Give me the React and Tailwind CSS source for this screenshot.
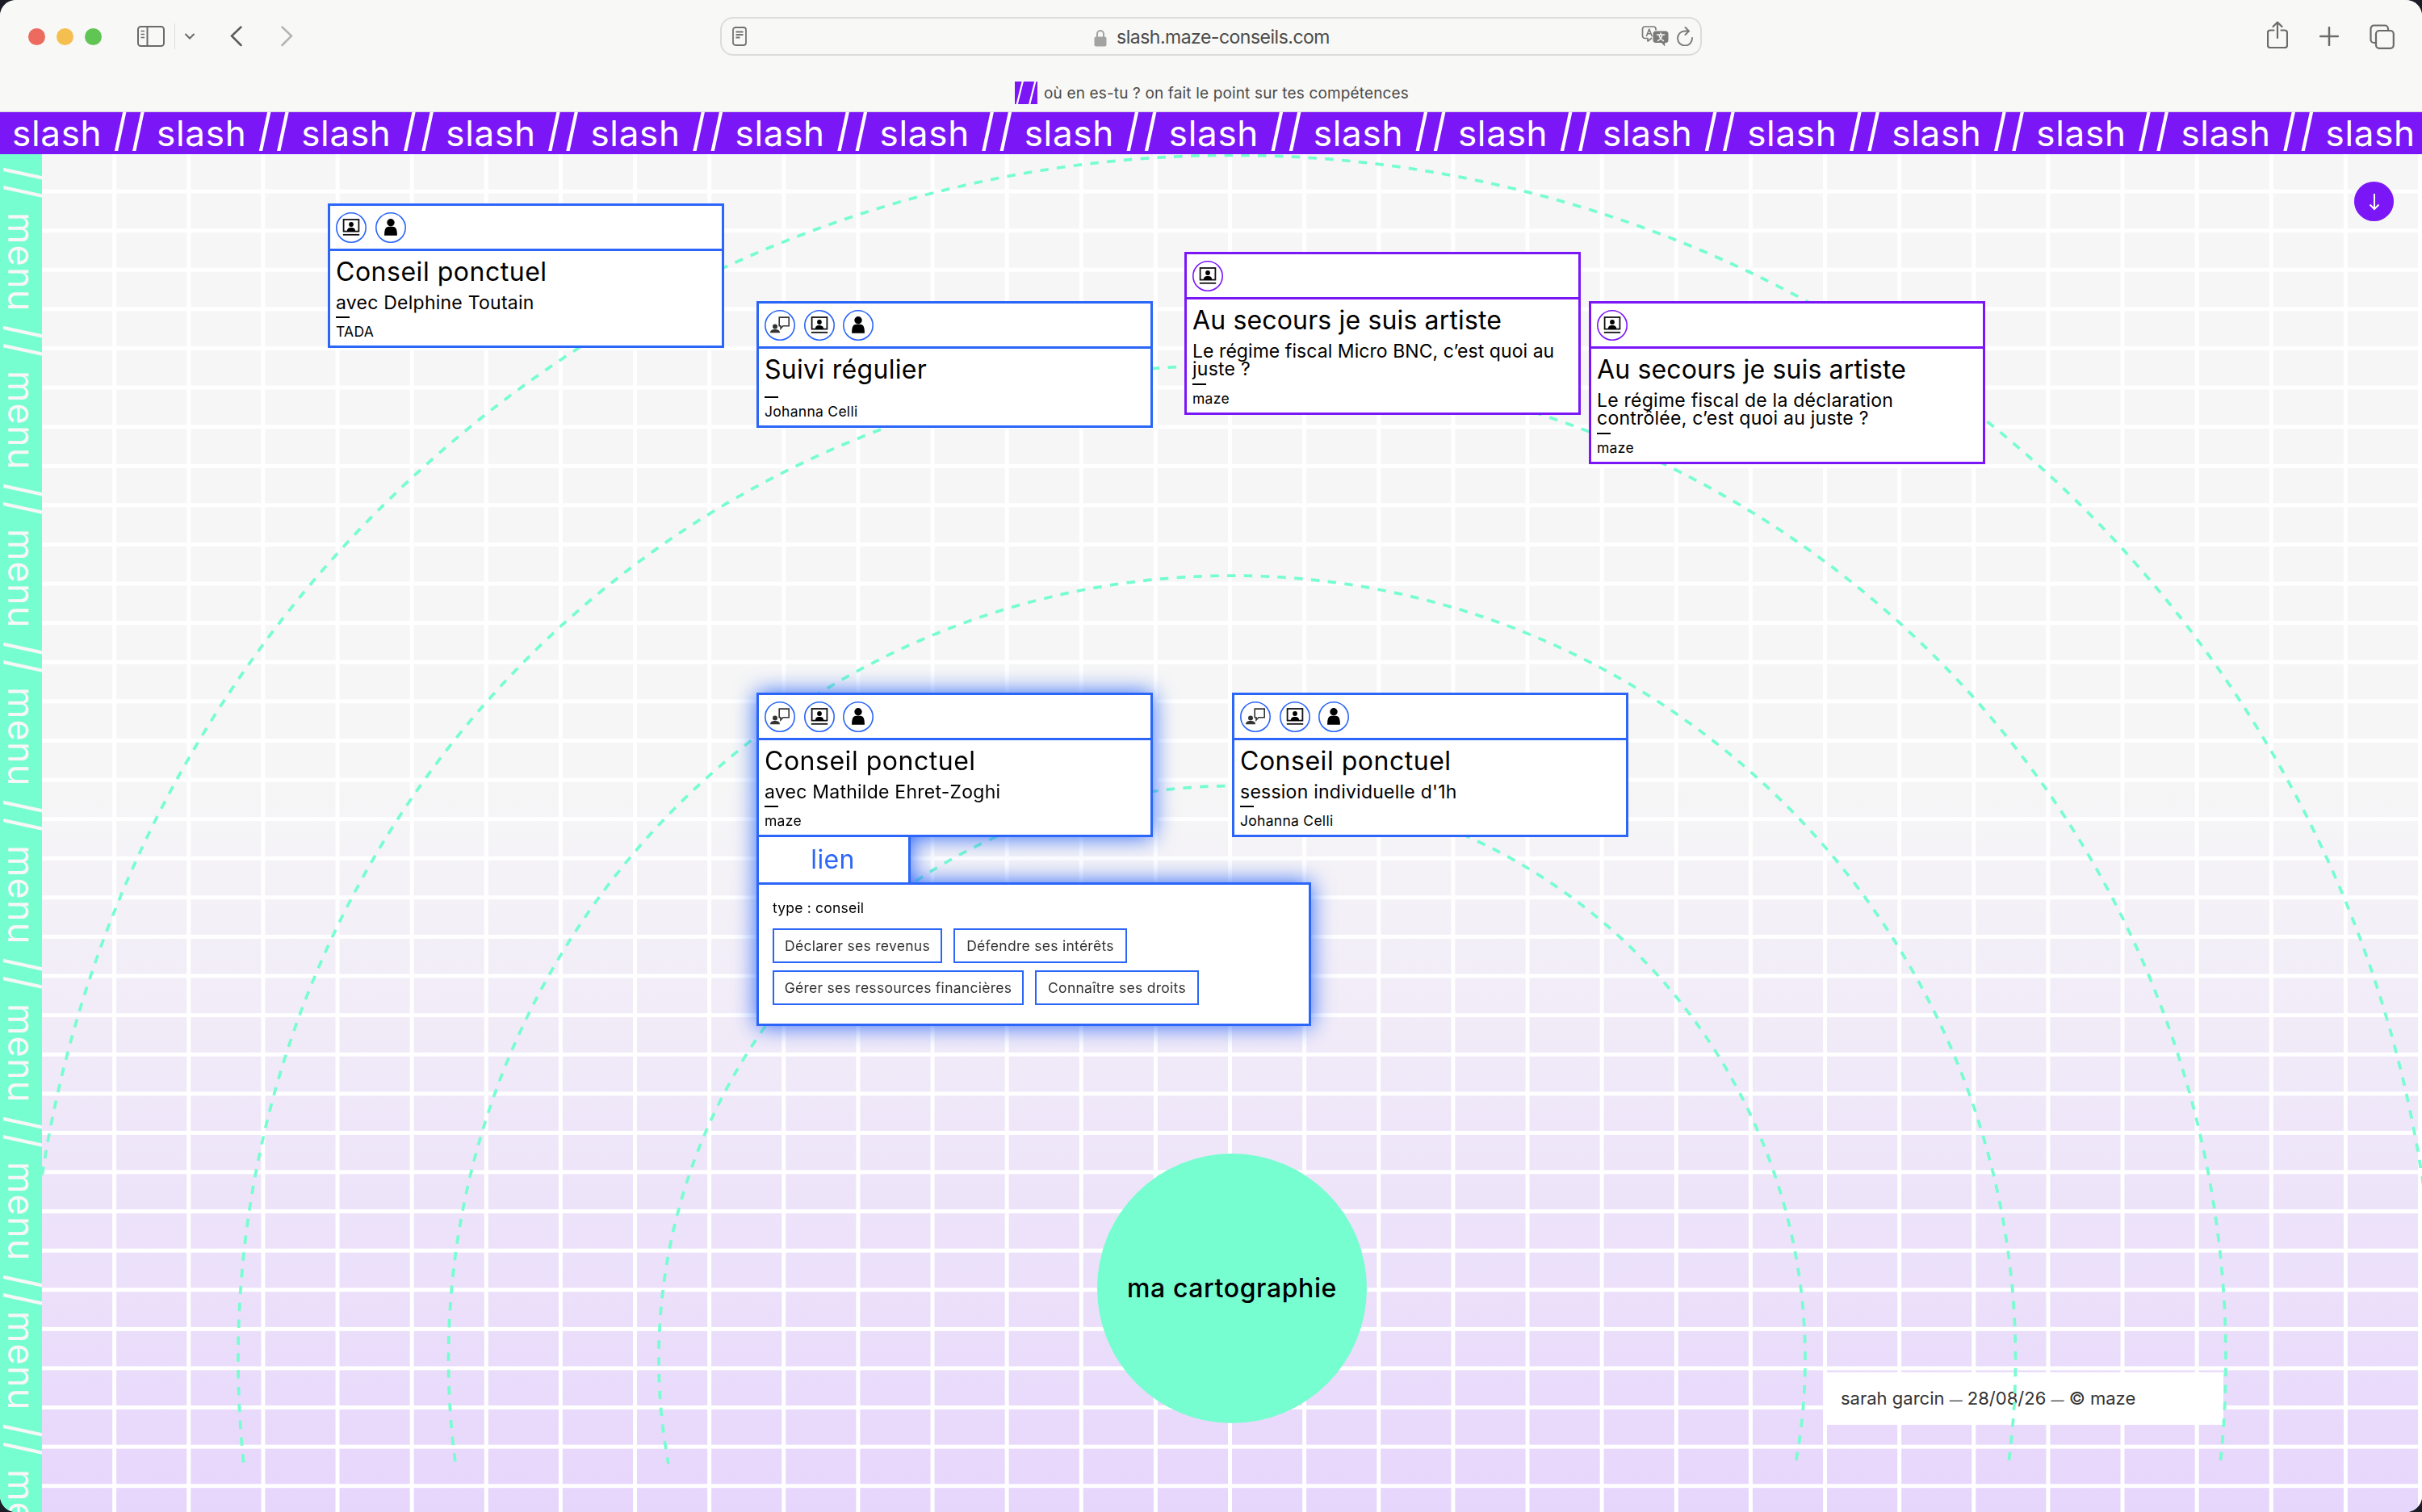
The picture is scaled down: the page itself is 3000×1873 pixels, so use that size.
import React from "react";

const BANNER_ITEMS = Array.from({ length: 17 });
const MENU_ITEMS = Array.from({ length: 9 });

// dashed rings around the centre of the map
const RINGS = [
  { r: 710, dash: 10.415, offset: 0 },
  { r: 970.5, dash: 10.415, offset: 0 },
  { r: 1231, dash: 10.432, offset: 0 },
  { r: 1491.3, dash: 10.415, offset: -9 },
];
const CENTER_X = 1474;
const CENTER_Y = 1492.6;

function ringPath(r) {
  const right = Math.sqrt(r * r - 125.4 * 125.4);
  const left = Math.sqrt(r * r - 130 * 130);
  return `M ${CENTER_X + right} ${CENTER_Y + 125.4} A ${r} ${r} 0 1 0 ${CENTER_X - left} ${CENTER_Y + 130}`;
}

function ChatIcon() {
  return (
    <>
      <circle cx="13" cy="20.6" r="3" fill="#333" />
      <path d="M7 28.2c0-2.800 2.200-4.200 6-4.200s6 1.400 6 4.200z" fill="#333" />
      <path d="M18.200 9.100h12v10.700h-7.200l-3 3.200v-3.200h-1.800z" fill="none" stroke="#333" strokeWidth="1.600" />
    </>
  );
}

function ScreenIcon() {
  return (
    <>
      <rect x="9.600" y="9" width="18.800" height="14.600" fill="none" stroke="#111" strokeWidth="1.800" />
      <circle cx="19" cy="15" r="2.900" />
      <path d="M13.800 24c0-3.600 1.800-4.900 5.200-4.900s5.200 1.300 5.200 4.900z" />
      <path d="M8.800 27.800h20.400" stroke="#111" strokeWidth="1.800" />
    </>
  );
}

function PersonIcon() {
  return (
    <>
      <circle cx="19" cy="12.700" r="4.700" />
      <path d="M11.100 28.700c0-7.500 1.300-11 5.400-11h5c4.100 0 5.400 3.500 5.400 11z" />
    </>
  );
}

const ICONS = { chat: ChatIcon, screen: ScreenIcon, person: PersonIcon };

function Card({ icons, title, titleClass = "tracking-[0.520px]", lines = [], author, purple }) {
  const border = purple ? "border-[#7b16f7]" : "border-[#2b66f8]";
  return (
    <div className={`w-[491px] border-[3px] bg-white text-black ${border}`}>
      <div className={`flex h-14 items-center gap-[10.500px] border-b-[3px] pl-[7px] ${border}`}>
        {icons.map((name) => {
          const Icon = ICONS[name];
          return (
            <svg key={name} viewBox="0 0 38 38" className="h-[38px] w-[38px]">
              <circle cx="19" cy="19" r="18.200" fill="none" stroke={purple ? "#7b16f7" : "#2b66f8"} strokeWidth="1.600" />
              <Icon />
            </svg>
          );
        })}
      </div>
      <div className="pt-[6px] pb-[7px] pl-[7px]">
        <h2 className={`pb-[7px] text-[32px] leading-10 whitespace-nowrap ${titleClass}`}>{title}</h2>
        {lines.map((line) => (
          <p
            key={line}
            className={`text-[23px] leading-[22.300px] whitespace-nowrap ${line.length > 40 ? "tracking-[0.060px]" : "tracking-[0.240px]"}`}
          >
            {line}
          </p>
        ))}
        <div className="mt-[6px] mb-[7px] h-0.5 w-[17px] bg-black" />
        <p className="text-[17.500px] leading-5 tracking-[0.280px]">{author}</p>
      </div>
    </div>
  );
}

function Tag({ className, children }) {
  return (
    <span className={`flex h-[43px] items-center justify-center border-2 border-[#2b66f8] text-[17.500px] tracking-[0.280px] whitespace-nowrap text-[#333] ${className}`}>
      {children}
    </span>
  );
}

function Toolbar() {
  return (
    <header className="h-[139px] border-b border-[#d6d3da] bg-[#f8f8f6]">
      <div className="flex h-[90px] items-center">
        <div className="flex w-[892px] items-center pl-[35px]">
          <div className="flex gap-3.5">
            <div className="h-[21px] w-[21px] rounded-full bg-[#ed6a5e]" />
            <div className="h-[21px] w-[21px] rounded-full bg-[#f5bf4f]" />
            <div className="h-[21px] w-[21px] rounded-full bg-[#61c554]" />
          </div>
          <svg viewBox="0 0 34 26" className="ml-11 h-[26px] w-[34px]" fill="none" stroke="#6b6b69" strokeWidth="2">
            <rect x="1" y="1" width="32" height="24" rx="3.500" />
            <path d="M12.500 1v24" />
            <path d="M4.500 6.500h4.500M4.500 10.500h4.500M4.500 14.500h4.500" strokeWidth="1.500" />
          </svg>
          <div className="ml-3 h-8 w-px bg-[#dededc]" />
          <svg viewBox="0 0 12 8" className="ml-3 h-2 w-3" fill="none" stroke="#6b6b69" strokeWidth="2" strokeLinecap="round">
            <path d="M1 1.500l5 5 5-5" />
          </svg>
          <svg viewBox="0 0 15 26" className="ml-[44px] h-[26px] w-[15px]" fill="none" stroke="#5c5c5a" strokeWidth="2.500" strokeLinecap="round">
            <path d="M13.500 1.500L2 12.500l11.500 11.500" />
          </svg>
          <svg viewBox="0 0 15 26" className="ml-[48px] h-[26px] w-[15px]" fill="none" stroke="#b4b4b2" strokeWidth="2.500" strokeLinecap="round">
            <path d="M1.500 1.500L13 12.500 1.500 24" />
          </svg>
        </div>
        <div className="flex h-12 w-[1216px] items-center rounded-[16px] border-2 border-[#dcdcda] px-[13px]">
          <svg viewBox="0 0 18 24" className="h-6 w-[18px]" fill="none" stroke="#737371" strokeWidth="1.800">
            <rect x="1" y="1" width="16" height="22" rx="3" />
            <path d="M4.500 6.500h9M4.500 10h9M4.500 13.500h5" />
          </svg>
          <div className="flex flex-1 items-center justify-center gap-3 pt-[3px] pl-[44px] text-[23px] text-[#4b4b4a]">
            <svg viewBox="0 0 16 22" className="h-[22px] w-4">
              <path d="M4 10V6a4 4 0 0 1 8 0v4" fill="none" stroke="#a3a3a1" strokeWidth="2" />
              <rect x="0.500" y="9.500" width="15" height="12" rx="2" fill="#a3a3a1" />
            </svg>
            <span className="tracking-[-0.500px]">slash.maze-conseils.com</span>
          </div>
          <svg viewBox="0 0 34 26" className="h-[26px] w-[34px]" fill="none" strokeLinejoin="round" strokeLinecap="round">
            <path d="M12.500 15.500L8 19v-3.500H4.500A3 3 0 0 1 1.500 12.500v-8.500a3 3 0 0 1 3-3h10.500a3 3 0 0 1 3 3v.800" stroke="#7a7a78" strokeWidth="1.700" />
            <path d="M6.500 12.500L9.800 4l3.300 8.500M7.800 9.800h4" stroke="#7a7a78" strokeWidth="1.600" />
            <path d="M18 6.500h12a3.500 3.500 0 0 1 3.500 3.500v7.500A3.500 3.500 0 0 1 30 21h-.800v4.500L25 21h-7a3.500 3.500 0 0 1-3.500-3.500V10A3.500 3.500 0 0 1 18 6.500z" fill="#7a7a78" />
            <path d="M19.500 11h9M24 9v2M20.500 18.500c3-1.500 5-4 5.500-7.500M27.500 18.500c-3-1.500-5-4-5.500-7.500" stroke="#f8f8f6" strokeWidth="1.500" />
          </svg>
          <svg viewBox="0 0 20 24" className="mr-[-4px] ml-2.5 h-6 w-5" fill="none" stroke="#7a7a78" strokeWidth="1.900" strokeLinecap="round">
            <path d="M13.500 5.500H10A9 9 0 1 0 19 14M10.500 1l4.500 4.500-4.500 4.500" />
          </svg>
        </div>
        <div className="flex flex-1 items-center justify-end pr-[34px] text-[#6b6b69]">
          <svg viewBox="0 0 26 34" className="mb-1 h-[34px] w-[26px]" fill="none" stroke="currentColor" strokeWidth="2.200" strokeLinecap="round" strokeLinejoin="round">
            <path d="M8.500 11.500H4a3 3 0 0 0-3 3V30a3 3 0 0 0 3 3h18a3 3 0 0 0 3-3V14.500a3 3 0 0 0-3-3h-4.500M13 21V1.500M7.500 7L13 1.500 18.500 7" />
          </svg>
          <svg viewBox="0 0 24 24" className="ml-[39px] h-6 w-6" fill="none" stroke="currentColor" strokeWidth="2.500" strokeLinecap="round">
            <path d="M12 1v22M1 12h22" />
          </svg>
          <svg viewBox="0 0 31 31" className="ml-[38px] h-[31px] w-[31px]" fill="none" stroke="currentColor" strokeWidth="2.200">
            <path d="M8 23H5.500a4 4 0 0 1-4-4V5.500a4 4 0 0 1 4-4H19a4 4 0 0 1 4 4V8" />
            <rect x="8" y="8" width="21.800" height="21.800" rx="4" />
          </svg>
        </div>
      </div>
      <div className="flex h-[49px] items-start justify-center gap-2 pt-[11px] pl-0.5">
        <svg viewBox="0 0 28 28" className="h-7 w-7">
          <rect width="28" height="28" fill="#7b16f7" />
          <path d="M2.500 29L10 -1M18 29L25.500 -1" stroke="#fff" strokeWidth="2.200" />
        </svg>
        <span className="text-[19px] leading-[29px] tracking-[0.150px] text-[#4b4b4a]">
          où en es-tu ? on fait le point sur tes compétences
        </span>
      </div>
    </header>
  );
}

export default function App() {
  return (
    <div className="h-[1873px] w-[3000px] overflow-hidden bg-[#1c1c26]">
      <div className="flex h-full w-full flex-col overflow-hidden rounded-[20px] bg-[#f7f7f7] font-['Inter',sans-serif]">
        <Toolbar />

        {/* Scrolling banner */}
        <div className="flex h-[52px] shrink-0 bg-[#7b16f7] pl-[15px] text-white">
          {BANNER_ITEMS.map((_, i) => (
            <div key={i} className="flex w-[179.100px] shrink-0 items-center">
              <span className="w-[126px] text-[44px] leading-[50px] tracking-[0.700px]">slash</span>
              {i < BANNER_ITEMS.length - 1 && (
                <span className="mb-[9px] inline-block scale-y-[1.260] text-[44px] leading-[44px] font-medium tracking-[6px]">//</span>
              )}
            </div>
          ))}
        </div>

        <div className="flex flex-1 overflow-hidden">
          {/* Vertical menu */}
          <nav className="w-[52px] shrink-0 bg-[#76fdd0] pt-[16px] text-[#f7f7f7]">
            {MENU_ITEMS.map((_, i) => (
              <div key={i} className={`flex w-[52px] items-center [writing-mode:vertical-rl] ${i === 7 ? "h-[185px]" : "h-[196px]"}`}>
                <span className={`ml-2 inline-block scale-x-[1.260] text-[44px] leading-[44px] font-medium tracking-[6px] ${i === 7 ? "h-[45px]" : "h-[56px]"}`}>
                  //
                </span>
                <span className="text-[45px] leading-[52px] tracking-[1.200px]">menu</span>
              </div>
            ))}
          </nav>

          {/* Map */}
          <main className="relative flex-1 overflow-hidden bg-[linear-gradient(to_bottom,#f6f6f6_0%,#f6f6f6_46%,#e7d6fc_100%)]">
            <div className="absolute inset-0 bg-[linear-gradient(to_right,transparent_87.125px,#fff_87.125px),linear-gradient(to_bottom,transparent_43.600px,#fff_43.600px)] bg-[size:92.125px_48.600px]" />

            <footer className="absolute top-[1509px] left-[2208px] flex h-[65px] w-[494px] items-center bg-white pl-5 text-[22px] text-[#333]">
              <p>
                sarah garcin <span className="text-[16px]">—</span> 28/08/26 <span className="text-[16px]">—</span> © maze
              </p>
            </footer>

            <svg viewBox="0 0 2948 1682" className="absolute top-0 left-0 h-[1682px] w-[2948px]" fill="none" stroke="#76fdd0" strokeWidth="3.700">
              {RINGS.map(({ r, dash, offset }) => (
                <path key={r} d={ringPath(r)} strokeDasharray={dash} strokeDashoffset={offset} />
              ))}
            </svg>

            <div className="absolute top-[1238px] left-[1307px] flex h-[334px] w-[334px] items-center justify-center rounded-full bg-[#76fdd0] text-[32px] font-medium tracking-[0.600px] text-black">
              ma cartographie
            </div>

            <div className="absolute top-[61px] left-[354px]">
              <Card icons={["screen", "person"]} title="Conseil ponctuel" lines={["avec Delphine Toutain"]} author="TADA" />
            </div>
            <div className="absolute top-[182px] left-[885px]">
              <Card icons={["chat", "screen", "person"]} title="Suivi régulier" titleClass="tracking-[0.300px]" author="Johanna Celli" />
            </div>
            <div className="absolute top-[121px] left-[1415px]">
              <Card
                purple
                icons={["screen"]}
                title="Au secours je suis artiste"
                titleClass="tracking-[0.150px]"
                lines={["Le régime fiscal Micro BNC, c’est quoi au", "juste ?"]}
                author="maze"
              />
            </div>
            <div className="absolute top-[182px] left-[1916px]">
              <Card
                purple
                icons={["screen"]}
                title="Au secours je suis artiste"
                titleClass="tracking-[0.150px]"
                lines={["Le régime fiscal de la déclaration", "contrôlée, c’est quoi au juste ?"]}
                author="maze"
              />
            </div>
            <div className="absolute top-[667px] left-[1474px]">
              <Card icons={["chat", "screen", "person"]} title="Conseil ponctuel" lines={["session individuelle d'1h"]} author="Johanna Celli" />
            </div>

            {/* Opened card */}
            <div className="absolute top-[667px] left-[885px] [filter:drop-shadow(0_0_14px_#2b66f8)]">
              <Card icons={["chat", "screen", "person"]} title="Conseil ponctuel" lines={["avec Mathilde Ehret-Zoghi"]} author="maze" />
              <div className="flex h-[56px] w-[191px] items-center justify-center border-x-[3px] border-[#2b66f8] bg-white pr-0.5 text-[32px] tracking-[0.300px] text-[#2b66f8]">
                lien
              </div>
              <div className="h-[178px] w-[687px] border-[3px] border-[#2b66f8] bg-white pt-[17px] pl-[17px]">
                <p className="text-[17.500px] leading-6 tracking-[0.200px] text-black">type : conseil</p>
                <div className="mt-[13px] flex flex-col gap-[9px]">
                  <div className="flex gap-3.5">
                    <Tag className="w-[210px]">Déclarer ses revenus</Tag>
                    <Tag className="w-[215px]">Défendre ses intérêts</Tag>
                  </div>
                  <div className="flex gap-3.5">
                    <Tag className="w-[311px]">Gérer ses ressources financières</Tag>
                    <Tag className="w-[203px]">Connaître ses droits</Tag>
                  </div>
                </div>
              </div>
            </div>

            <button className="absolute top-[34px] left-[2864px] flex h-[49px] w-[49px] items-center justify-center rounded-full bg-[#7b16f7]">
              <svg viewBox="0 0 14 22" className="h-[22px] w-3.5" fill="none" stroke="#fff" strokeWidth="2">
                <path d="M7 1v19M1.500 14.500L7 20l5.500-5.500" />
              </svg>
            </button>
          </main>
        </div>
      </div>
    </div>
  );
}
